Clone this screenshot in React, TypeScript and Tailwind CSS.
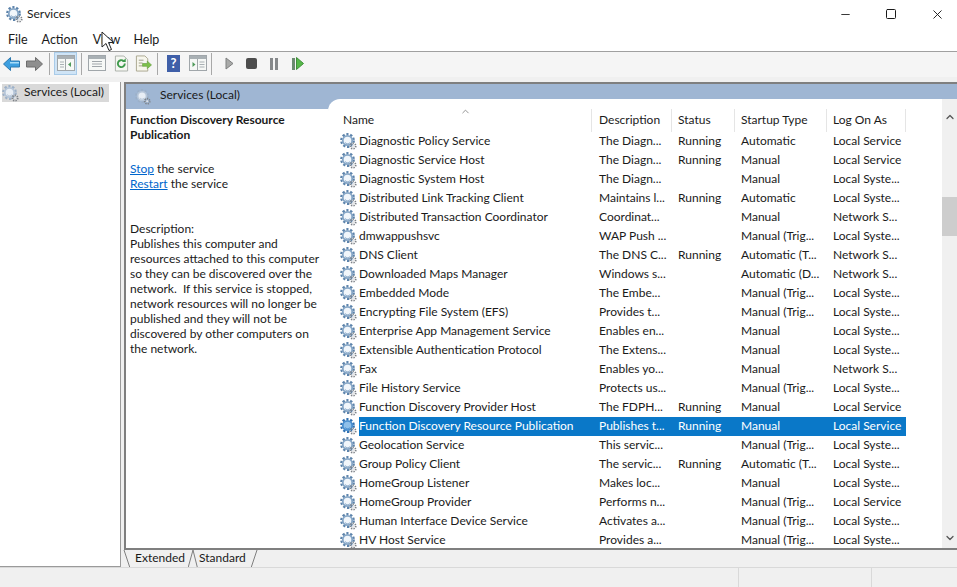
import { ChevronDown, ChevronUp, Minus, Square, X } from "lucide-react";

const services = [
  ["Diagnostic Policy Service", "The Diagn...", "Running", "Automatic", "Local Service"],
  ["Diagnostic Service Host", "The Diagn...", "Running", "Manual", "Local Service"],
  ["Diagnostic System Host", "The Diagn...", "", "Manual", "Local Syste..."],
  ["Distributed Link Tracking Client", "Maintains l...", "Running", "Automatic", "Local Syste..."],
  ["Distributed Transaction Coordinator", "Coordinat...", "", "Manual", "Network S..."],
  ["dmwappushsvc", "WAP Push ...", "", "Manual (Trig...", "Local Syste..."],
  ["DNS Client", "The DNS C...", "Running", "Automatic (T...", "Network S..."],
  ["Downloaded Maps Manager", "Windows s...", "", "Automatic (D...", "Network S..."],
  ["Embedded Mode", "The Embe...", "", "Manual (Trig...", "Local Syste..."],
  ["Encrypting File System (EFS)", "Provides t...", "", "Manual (Trig...", "Local Syste..."],
  ["Enterprise App Management Service", "Enables en...", "", "Manual", "Local Syste..."],
  ["Extensible Authentication Protocol", "The Extens...", "", "Manual", "Local Syste..."],
  ["Fax", "Enables yo...", "", "Manual", "Network S..."],
  ["File History Service", "Protects us...", "", "Manual (Trig...", "Local Syste..."],
  ["Function Discovery Provider Host", "The FDPH...", "Running", "Manual", "Local Service"],
  ["Function Discovery Resource Publication", "Publishes t...", "Running", "Manual", "Local Service"],
  ["Geolocation Service", "This servic...", "", "Manual (Trig...", "Local Syste..."],
  ["Group Policy Client", "The servic...", "Running", "Automatic (T...", "Local Syste..."],
  ["HomeGroup Listener", "Makes loc...", "", "Manual", "Local Syste..."],
  ["HomeGroup Provider", "Performs n...", "", "Manual (Trig...", "Local Service"],
  ["Human Interface Device Service", "Activates a...", "", "Manual (Trig...", "Local Syste..."],
  ["HV Host Service", "Provides a...", "", "Manual (Trig...", "Local Syste..."],
];

const SELECTED = "Function Discovery Resource Publication";

function Gears({ size = 17, faint = false, selected = false }: { size?: number; faint?: boolean; selected?: boolean }) {
  const teeth = faint ? "#9cb0c8" : selected ? "#2f6fb0" : "#5b82aa";
  const ring = faint ? "#b5c5d8" : selected ? "#4a8fcf" : "#86a6c6";
  const core = selected ? "#8fc0ea" : faint ? "#e8eef5" : "#f1f6fb";
  return (
    <svg width={size} height={size} viewBox="0 0 17 17" className="shrink-0" aria-hidden>
      <circle cx="7.5" cy="7.5" r="6.2" fill="none" stroke={teeth} strokeWidth="2.4" strokeDasharray="2.2 1.7" />
      <circle cx="7.5" cy="7.5" r="4.7" fill={core} stroke={ring} strokeWidth="1.8" />
      <path d="M5 9.5a3.4 3.4 0 0 0 5 .2" fill="none" stroke={ring} strokeWidth="0.9" />
      <circle cx="13" cy="13" r="2.7" fill="none" stroke="#7d8288" strokeWidth="1.8" strokeDasharray="1.3 1.1" />
      <circle cx="13" cy="13" r="1.1" fill="#dfe2e6" />
    </svg>
  );
}

function WindowIcon({ kind }: { kind: "left" | "list" | "right" }) {
  return (
    <svg width="18" height="17" viewBox="0 0 18 17" aria-hidden>
      <rect x="0.500" y="0.500" width="17" height="15" fill="#f6f8f6" stroke="#a0a6aa" />
      <rect x="1" y="1" width="16" height="3" fill="#a9b0b4" />
      {kind === "list" ? (
        <path d="M4 6.500h10M4 9h10M4 11.500h10" stroke="#a0a6aa" />
      ) : (
        <>
          <path d="M8.500 4v11" stroke="#a0a6aa" />
          {kind === "left" ? (
            <path d="M14 7v5l-3-2.500z" fill="#4f9a5a" />
          ) : (
            <path d="M3.500 7v5l3-2.500z" fill="#4f9a5a" />
          )}
          <path d={kind === "left" ? "M3 7h4M3 9.500h4M3 12h4" : "M10.500 7h5M10.500 9.500h5M10.500 12h5"} stroke="#a9b0b4" />
        </>
      )}
    </svg>
  );
}

function Toolbar() {
  return (
    <div className="flex h-[25px] items-center bg-[#f5f5f5] pb-[2px] pl-[3px]">
      <svg width="17" height="14" viewBox="0 0 17 14" aria-hidden>
        <path d="M0.500 7 7.500 0.500v3.500h9v6h-9v3.500z" fill="#3d9fe0" stroke="#2d78ae" />
        <path d="M7 5h9v1.500H7z" fill="#a9dcf8" />
      </svg>
      <svg width="17" height="14" viewBox="0 0 17 14" className="ml-[6px]" aria-hidden>
        <path d="M16.500 7 9.500 0.500v3.500h-9v6h9v3.500z" fill="#8e8e8e" stroke="#6d6d6d" />
      </svg>
      <div className="ml-[6px] mr-[3px] h-[22px] w-px bg-[#a8a8a8]" />
      <div className="mx-[1px] flex h-[23px] w-[23px] items-center justify-center border border-[#a9cbe8] bg-[#cfe4f6]">
        <WindowIcon kind="left" />
      </div>
      <div className="ml-[3px] mr-[6px] h-[22px] w-px bg-[#a8a8a8]" />
      <WindowIcon kind="list" />
      <svg width="15" height="17" viewBox="0 0 16 17" className="ml-[8px]" aria-hidden>
        <path d="M1.500 0.500h9l4 4v12h-13z" fill="#f5f7f2" stroke="#a9aea8" />
        <path d="M11.500 8.500a3.700 3.700 0 1 1-1.200-2.600" fill="none" stroke="#3f9a4c" strokeWidth="2" />
        <path d="M12.500 3v4h-4z" fill="#3f9a4c" />
      </svg>
      <svg width="17" height="17" viewBox="0 0 18 17" className="ml-[6px]" aria-hidden>
        <path d="M1.500 0.500h9l3 3v4M13.500 14v2.500h-12v-16" fill="#f7f6ec" stroke="#a9a68e" />
        <path d="M4 5h5M4 8h4M4 11h4" stroke="#9a9a86" />
        <path d="M8 8.500h5v-2.500l4.500 4-4.500 4v-2.500h-5z" fill="#7cc04a" stroke="#5c9636" strokeWidth="0.6" />
      </svg>
      <div className="ml-[5px] mr-[9px] h-[22px] w-px bg-[#a8a8a8]" />
      <div className="flex h-[17px] w-[13px] items-center justify-center bg-[#3f5fa8] text-[13px] font-bold text-white">?</div>
      <div className="ml-[9px]">
        <WindowIcon kind="right" />
      </div>
      <div className="ml-[4px] mr-[13px] h-[22px] w-px bg-[#a8a8a8]" />
      <svg width="9" height="13" viewBox="0 0 9 13" aria-hidden>
        <path d="M1 1v11l7-5.500z" fill="#a9aaa9" stroke="#7f8080" />
      </svg>
      <div className="ml-[12px] h-[11px] w-[11px] rounded-[2px] bg-[#4d4d4d]" />
      <div className="ml-[13px] h-[12px] w-[3px] bg-[#85888a]" />
      <div className="ml-[2px] h-[12px] w-[3px] bg-[#85888a]" />
      <div className="ml-[14px] h-[12px] w-[3px] bg-[#6b8a70]" />
      <svg width="8" height="13" viewBox="0 0 8 13" className="ml-[1px]" aria-hidden>
        <path d="M0.500 0.500v12l7-6z" fill="#55b848" stroke="#3f8f3a" />
      </svg>
    </div>
  );
}

function ServiceRow({ row }: { row: string[] }) {
  const on = row[0] === SELECTED;
  const cell = on ? "bg-[#0a78c8] text-white" : "";
  return (
    <div className="grid h-[19px] shrink-0 grid-cols-[264px_80px_63px_92px_79px] items-stretch leading-[17px] text-[#1a1a1a]">
      <div className="flex items-center pl-[12px]">
        <Gears selected={on} />
        <span className={`ml-[2px] flex-1 self-stretch whitespace-nowrap ${cell}`}>{row[0]}</span>
      </div>
      <span className={`whitespace-nowrap pl-[7px] ${cell}`}>{row[1]}</span>
      <span className={`whitespace-nowrap pl-[6px] ${cell}`}>{row[2]}</span>
      <span className={`whitespace-nowrap pl-[6px] ${cell}`}>{row[3]}</span>
      <span className={`whitespace-nowrap pl-[6px] ${cell}`}>{row[4]}</span>
    </div>
  );
}

function HeaderCell({ label, pad = "pl-[6px]" }: { label: string; pad?: string }) {
  return <div className={`flex h-[23px] items-center border-r border-[#e5e5e5] pb-[2px] ${pad}`}>{label}</div>;
}

export default function App() {
  return (
    <div className="relative flex h-[587px] w-[957px] flex-col overflow-hidden bg-[#f0f0f0] font-['Lato','Liberation_Sans',sans-serif] text-[12px] text-[#1a1a1a]">
      <div className="flex h-[28px] items-center bg-white pl-[6px]">
        <Gears />
        <span className="ml-[4px]">Services</span>
        <div className="ml-auto flex items-center">
          <Minus size={13} strokeWidth={1.6} className="mr-[33px]" />
          <Square size={12} strokeWidth={2} className="mr-[33px]" />
          <X size={15} strokeWidth={1.5} className="mr-[12px]" />
        </div>
      </div>
      <div className="flex h-[24px] items-center gap-[14px] border-b border-[#a0a0a0] bg-white pl-[8px] pt-[1px] text-[12.5px]">
        <span>File</span>
        <span>Action</span>
        <span className="ml-[1px]">View</span>
        <span className="ml-[-1px]">Help</span>
      </div>
      <Toolbar />
      <div className="flex min-h-0 flex-1 pt-[5px]">
        <div className="h-[485px] w-[121px] shrink-0 border-r border-b border-[#9a9a9a] bg-white pl-[2px] pt-[2px]">
          <div className="flex h-[18px] w-[107px] items-center whitespace-nowrap bg-[#d9d9d9]">
            <Gears faint />
            <span className="mb-[2px] ml-[5px]">Services (Local)</span>
          </div>
        </div>
        <div className="ml-[3px] flex min-w-0 flex-1 flex-col">
          <div className="flex h-[466px] border-t-2 border-l-2 border-[#7f7f7f] bg-white">
            <div className="w-[202px] shrink-0">
              <div className="flex h-[25px] items-center bg-[#9fb6d3] pl-[9px]">
                <Gears size={16} faint />
                <span className="mb-[3px] ml-[9px]">Services (Local)</span>
              </div>
              <div className="pl-[4px] pr-[4px] pt-[3px] leading-[15px]">
                <p className="font-bold">Function Discovery Resource Publication</p>
                <p className="mt-[19px]"><a className="text-[#0066cc] underline">Stop</a> the service</p>
                <p><a className="text-[#0066cc] underline">Restart</a> the service</p>
                <p className="mt-[30px]">Description:</p>
                <p>Publishes this computer and resources attached to this computer so they can be discovered over the network.&nbsp; If this service is stopped, network resources will no longer be published and they will not be discovered by other computers on the network.</p>
              </div>
            </div>
            <div className="flex min-w-0 flex-1 flex-col bg-[#9fb6d3] pt-[15px]">
              <div className="flex min-h-0 flex-1 rounded-tl-[12px] bg-white">
                <div className="flex min-w-0 flex-1 flex-col overflow-hidden pt-[10px]">
                  <div className="relative grid shrink-0 grid-cols-[264px_80px_63px_92px_79px]">
                    <HeaderCell label="Name" pad="pl-[15px]" />
                    <HeaderCell label="Description" pad="pl-[7px]" />
                    <HeaderCell label="Status" />
                    <HeaderCell label="Startup Type" />
                    <HeaderCell label="Log On As" />
                    <ChevronUp size={11} className="absolute left-[132px] top-[-3px] text-[#8a8a8a]" />
                  </div>
                  {services.map((row) => (
                    <ServiceRow key={row[0]} row={row} />
                  ))}
                </div>
                <div className="flex w-[15px] shrink-0 flex-col items-center bg-[#f0f0f0] pt-[12px] text-[#555]">
                  <ChevronUp size={12} strokeWidth={2.5} />
                  <div className="mt-[74px] h-[39px] w-full bg-[#cdcdcd]" />
                  <ChevronDown size={12} strokeWidth={2.5} className="mt-auto mb-[4px]" />
                </div>
              </div>
            </div>
          </div>
          <div className="flex h-[20px] items-stretch border-t-2 border-[#7f7f7f]">
            <svg width="8" height="18" viewBox="0 0 8 18" aria-hidden className="ml-[-1px] shrink-0">
              <path d="M1 0 7 18" stroke="#7f7f7f" fill="none" />
            </svg>
            <span className="w-[57px] border-b border-[#7f7f7f] pl-[4px] leading-[16px]">Extended</span>
            <svg width="10" height="18" viewBox="0 0 10 18" className="shrink-0" aria-hidden>
              <path d="M0 18 5 0l4.500 18" stroke="#7f7f7f" fill="none" />
            </svg>
            <span className="w-[52px] border-b border-[#7f7f7f] pl-[1px] leading-[16px]">Standard</span>
            <svg width="8" height="18" viewBox="0 0 8 18" className="shrink-0" aria-hidden>
              <path d="M1 18 7 0" stroke="#7f7f7f" fill="none" />
            </svg>
          </div>
        </div>
      </div>
      <div className="flex h-[20px] shrink-0 border-t border-[#d9d9d9]">
        <div className="w-[739px] border-r border-[#d9d9d9]" />
        <div className="w-[133px] border-r border-[#d9d9d9]" />
      </div>
      <svg width="15" height="21" viewBox="0 0 15 21" className="absolute left-[101px] top-[31px]" aria-hidden>
        <path d="M1 1v15l4-3.500 3 7 2.500-1-3-7H12.500z" fill="#fff" stroke="#222" />
      </svg>
    </div>
  );
}
